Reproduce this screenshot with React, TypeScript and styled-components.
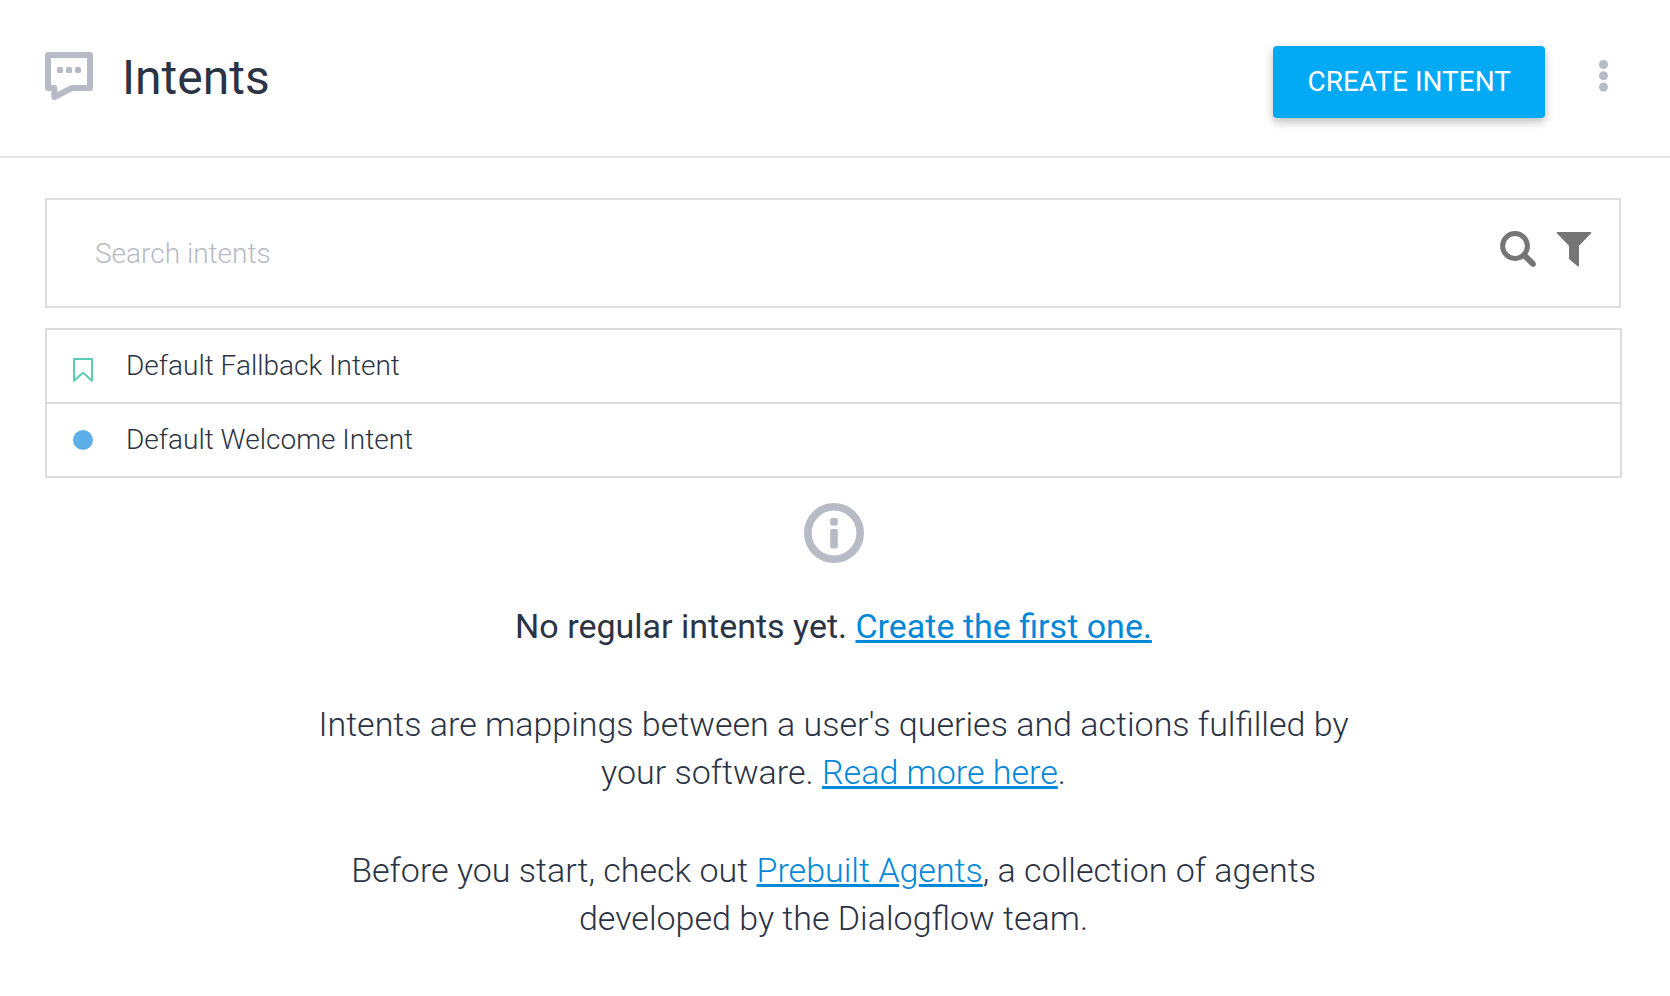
import React from "react";
import styled, { createGlobalStyle } from "styled-components";

const GlobalStyle = createGlobalStyle`
  *, *::before, *::after { box-sizing: border-box; }
  body {
    margin: 0;
    background: #ffffff;
    color: #2b3344;
    font-family: Roboto, "Liberation Sans", sans-serif;
    font-size: 28px;
    font-weight: 300;
  }
`;

const Header = styled.header`
  display: flex;
  align-items: center;
  height: 158px;
  padding: 0 54px 4px 45px;
  border-bottom: 2px solid #e5e5e5;
`;

const Title = styled.h1`
  flex: 1;
  margin: 0 0 0 29px;
  padding-top: 4px;
  font-size: 48px;
  line-height: 56px;
  font-weight: 400;
`;

const CreateButton = styled.button`
  height: 72px;
  margin-top: 12px;
  padding: 0 34px 2px;
  border: 0;
  border-radius: 4px;
  background: #02a9f4;
  color: #ffffff;
  font: inherit;
  font-weight: 400;
  text-transform: uppercase;
  white-space: nowrap;
  box-shadow: 0 4px 10px rgba(0, 0, 0, 0.26);
  cursor: pointer;
`;

const IconButton = styled.button`
  display: flex;
  padding: 0;
  border: 0;
  background: none;
  color: #757575;
  cursor: pointer;
`;

const MenuButton = styled(IconButton)`
  margin-left: 46px;
  color: #b7bbc5;
`;

const Main = styled.main`
  padding: 40px 48px 48px 45px;
`;

const SearchBar = styled.form`
  display: flex;
  align-items: center;
  height: 110px;
  margin-right: 1px;
  padding: 0 27px 0 48px;
  border: 2px solid #dedede;
`;

const SearchInput = styled.input`
  flex: 1;
  min-width: 0;
  padding: 0;
  border: 0;
  outline: 0;
  background: none;
  color: inherit;
  font: inherit;
  &::placeholder { color: #b7bbc5; opacity: 1; }
`;

const SearchActions = styled.div`
  display: flex;
  align-items: center;
  gap: 20px;
  padding-bottom: 8px;
`;

const IntentList = styled.ul`
  margin: 20px 0 0;
  padding: 0;
  list-style: none;
  border: 2px solid #dcdcdc;
`;

const IntentRow = styled.li`
  display: flex;
  align-items: center;
  gap: 33px;
  height: 72px;
  padding: 0 26px;
  & + & { height: 74px; border-top: 2px solid #dcdcdc; }
`;

const IntentName = styled.span`
  padding-bottom: 2px;
`;

const EmptyState = styled.section`
  display: flex;
  flex-direction: column;
  align-items: center;
  gap: 50px;
  max-width: 1080px;
  margin: 25px auto 0;
  font-size: 34px;
  line-height: 48px;
  text-align: center;
`;

const EmptyTitle = styled.h2`
  margin: -11px 0 0;
  font-size: 34px;
  font-weight: 400;
`;

const Paragraph = styled.p`
  margin: 0;
`;

const Link = styled.a`
  color: #0288d8;
  text-decoration: underline;
`;

const ChatIcon = () => (
  <svg width="48" height="48" viewBox="0 0 48 48" aria-hidden="true">
    <path d="M3 3H45V36H27L9.3 45V36H3Z" fill="none" stroke="#b7bbc5" strokeWidth="6" strokeLinejoin="round" />
    <g fill="#b7bbc5">
      <rect x="12" y="15" width="6" height="6" rx="1.5" />
      <rect x="21" y="15" width="6" height="6" rx="1.5" />
      <rect x="30" y="15" width="6" height="6" rx="1.5" />
    </g>
  </svg>
);

const DotsIcon = () => (
  <svg width="25" height="32" viewBox="0 0 25 32" fill="currentColor" aria-hidden="true">
    <circle cx="12.5" cy="4.5" r="4.5" />
    <circle cx="12.5" cy="15.7" r="4.5" />
    <circle cx="12.5" cy="27" r="4.5" />
  </svg>
);

const SearchIcon = () => (
  <svg width="36" height="36" viewBox="0 0 36 36" fill="none" stroke="currentColor" aria-hidden="true">
    <circle cx="15" cy="15" r="12.4" strokeWidth="5" />
    <path d="M24.5 24.5L32.8 32.8" strokeWidth="5.8" />
    <path d="M24.5 24.5L33.2 33.2" strokeWidth="5.2" strokeLinecap="round" />
  </svg>
);

const FilterIcon = () => (
  <svg width="36" height="36" viewBox="0 0 36 36" fill="currentColor" aria-hidden="true">
    <path d="M1.6 1H34.4Q35.8 1 35 2.6L23 14.8V34.4Q23 36 21.6 35.2L13.6 28.4Q13 27.8 13 27V14.8L1 2.6Q.2 1 1.6 1Z" />
  </svg>
);

const BookmarkIcon = () => (
  <svg width="20" height="32" viewBox="0 0 20 32" aria-hidden="true">
    <path d="M1 9H19V30.8L10 22.8L1 30.8Z" fill="none" stroke="#57cdb3" strokeWidth="2" strokeLinejoin="round" />
  </svg>
);

const DotIcon = () => (
  <svg width="20" height="20" viewBox="0 0 20 20" aria-hidden="true">
    <circle cx="10" cy="10" r="10" fill="#5dafe8" />
  </svg>
);

const InfoIcon = () => (
  <svg width="60" height="60" viewBox="0 0 60 60" aria-hidden="true">
    <circle cx="30" cy="30" r="26.2" fill="none" stroke="#b7bbc5" strokeWidth="7.6" />
    <rect x="26.2" y="15" width="7.6" height="7.4" rx="1.6" fill="#b7bbc5" />
    <rect x="26.2" y="26" width="7.6" height="19.4" rx="1.6" fill="#b7bbc5" />
  </svg>
);

const intents = [
  { name: "Default Fallback Intent", icon: <BookmarkIcon /> },
  { name: "Default Welcome Intent", icon: <DotIcon /> },
];

export default function App() {
  return (
    <>
      <GlobalStyle />
      <Header>
        <ChatIcon />
        <Title>Intents</Title>
        <CreateButton type="button">Create Intent</CreateButton>
        <MenuButton type="button" aria-label="More options">
          <DotsIcon />
        </MenuButton>
      </Header>
      <Main>
        <SearchBar role="search" onSubmit={(e) => e.preventDefault()}>
          <SearchInput type="text" placeholder="Search intents" aria-label="Search intents" />
          <SearchActions>
            <IconButton type="submit" aria-label="Search">
              <SearchIcon />
            </IconButton>
            <IconButton type="button" aria-label="Filter">
              <FilterIcon />
            </IconButton>
          </SearchActions>
        </SearchBar>
        <IntentList>
          {intents.map((intent) => (
            <IntentRow key={intent.name}>
              {intent.icon}
              <IntentName>{intent.name}</IntentName>
            </IntentRow>
          ))}
        </IntentList>
        <EmptyState>
          <InfoIcon />
          <EmptyTitle>
            No regular intents yet. <Link href="#create">Create the first one.</Link>
          </EmptyTitle>
          <Paragraph>
            Intents are mappings between a user's queries and actions fulfilled by your software.{" "}
            <Link href="#docs">Read more here</Link>.
          </Paragraph>
          <Paragraph>
            Before you start, check out <Link href="#agents">Prebuilt Agents</Link>, a collection of agents
            developed by the Dialogflow team.
          </Paragraph>
        </EmptyState>
      </Main>
    </>
  );
}
